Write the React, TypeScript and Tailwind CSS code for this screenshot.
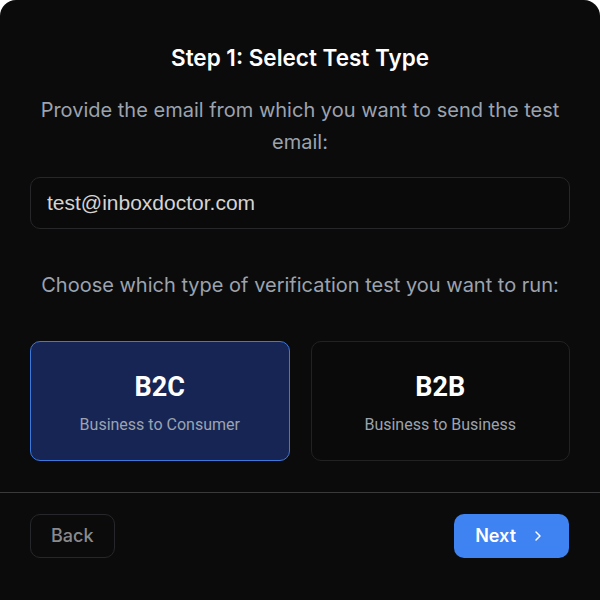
import { useState } from 'react';
import { ChevronRight } from 'lucide-react';

const options = [
    { id: 'b2c', title: 'B2C', subtitle: 'Business to Consumer' },
    { id: 'b2b', title: 'B2B', subtitle: 'Business to Business' },
];

export default function App() {
    const [selected, setSelected] = useState('b2c');
    const [email, setEmail] = useState('test@inboxdoctor.com');

    return (
        <div className="min-h-screen bg-white font-['Inter',sans-serif]">
            <div className="h-[620px] rounded-2xl bg-[#0b0b0b] overflow-hidden">
                {/* Body */}
                <div className="px-[30px] pt-11 text-center">
                    <h2 className="text-[22.5px] leading-7 font-semibold text-white">Step 1: Select Test Type</h2>
                    <p className="mt-[22px] text-[20px] leading-8 text-[#9ca3af]">
                        Provide the email from which you want to send the test email:
                    </p>
                    <input
                        value={email}
                        onChange={(e) => setEmail(e.target.value)}
                        className="mt-[19px] block w-full h-[52px] px-4 rounded-[10px] border border-[#27272a] bg-[#0a0a0a] text-[21px] text-[#d4d4d4] font-['Liberation_Sans',Arial,sans-serif] outline-none"
                    />
                    <p className="mt-[42px] text-[20px] leading-7 text-[#9ca3af]">
                        Choose which type of verification test you want to run:
                    </p>
                    <div className="mt-[42px] grid grid-cols-2 gap-[21px]">
                        {options.map((o) => {
                            const active = selected === o.id;
                            return (
                                <button
                                    key={o.id}
                                    onClick={() => setSelected(o.id)}
                                    className={
                                        active
                                            ? 'h-[120px] pt-[6px] flex flex-col items-center justify-center rounded-[10px] border border-[#3d78dc] bg-[#172554] font-["Roboto",sans-serif]'
                                            : 'h-[120px] pt-[6px] flex flex-col items-center justify-center rounded-[10px] border border-[#222225] bg-[#0a0a0a] font-["Roboto",sans-serif]'
                                    }
                                >
                                    <span className="text-[27px] leading-8 font-bold text-white">{o.title}</span>
                                    <span className="mt-[10px] text-base leading-6 text-[#9ca3af]">{o.subtitle}</span>
                                </button>
                            );
                        })}
                    </div>
                </div>

                {/* Footer */}
                <div className="mt-[31px] border-t border-[#3a3a3d] px-[30px] pt-[21px] flex items-center justify-between">
                    <button className="h-11 px-[20px] rounded-[10px] border border-[#26272b] text-lg font-medium text-[#8a8a8e]">
                        Back
                    </button>
                    <button className="mr-[1px] h-11 pl-[21px] pr-[23px] rounded-[10px] bg-[#3f82f1] text-lg font-semibold text-white flex items-center gap-[14px]">
                        Next
                        <ChevronRight className="w-4 h-4" strokeWidth={2.2} />
                    </button>
                </div>
            </div>
        </div>
    );
}
